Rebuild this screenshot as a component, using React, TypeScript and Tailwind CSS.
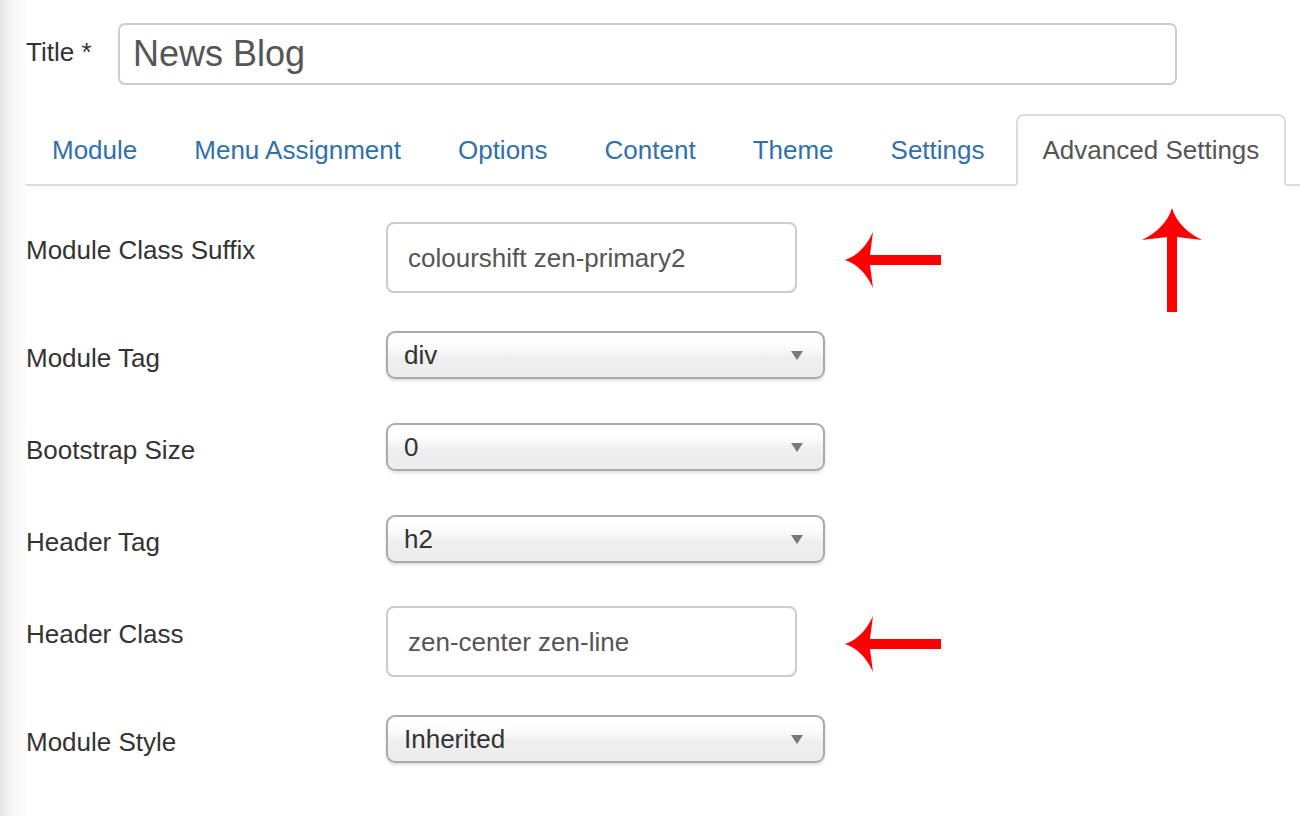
import React from 'react';

const tabs = ['Module', 'Menu Assignment', 'Options', 'Content', 'Theme', 'Settings'];

const LeftArrow = () => (
    <svg width="96" height="56" viewBox="0 0 96 56" className="ml-[48px] mt-[10px] shrink-0">
        <path d="M0 28 Q18 22 28 0 L25 23 H96 V33 H25 L28 56 Q18 34 0 28 Z" fill="#ff0000" />
    </svg>
);

const UpArrow = () => (
    <svg width="60" height="104" viewBox="0 0 60 104" className="absolute left-[1142px] top-[208px]">
        <path d="M30 0 Q36 20 60 32 L35 29 V104 H25 V29 L0 32 Q24 20 30 0 Z" fill="#ff0000" />
    </svg>
);

const TextInput = ({ value }: { value: string }) => (
    <div className="flex h-[71px] w-[411px] shrink-0 items-center rounded-[8px] border-2 border-[#ccc] bg-white pl-[20px] text-[#555]">
        {value}
    </div>
);

const Select = ({ value }: { value: string }) => (
    <div className="flex h-[48px] w-[439px] shrink-0 items-center justify-between rounded-[9px] border-2 border-[#aaa] bg-[linear-gradient(to_bottom,#ffffff_0%,#fdfdfd_30%,#efefef_55%,#ececec_100%)] pl-[16px] pr-[20px] text-[#333] shadow-[0_2px_3px_rgba(0,0,0,0.12)]">
        <span>{value}</span>
        <svg width="12" height="9" viewBox="0 0 12 9">
            <path d="M0 0 H12 L6 9 Z" fill="#7a7a7a" />
        </svg>
    </div>
);

export default function App() {
    return (
        <div className="relative min-h-[816px] w-full bg-[linear-gradient(to_right,#e7e7e7_0px,#f7f7f7_14px,#ffffff_28px)] pl-[26px] pt-[23px] font-['Liberation_Sans',Arial,sans-serif] text-[26px] leading-[36px]">
            {/* Title */}
            <div className="flex items-start">
                <label className="w-[92px] pt-[11px] text-[#333]">Title *</label>
                <div className="flex h-[62px] w-[1059px] items-center rounded-[7px] border-2 border-[#ccc] bg-white pl-[13px] text-[36px] text-[#555]">
                    News Blog
                </div>
            </div>

            {/* Tabs */}
            <ul className="mt-[29px] flex border-b-2 border-[#ddd]">
                {tabs.map((t) => (
                    <li
                        key={t}
                        className="-mb-[2px] mr-[5px] border-2 border-transparent px-[24px] py-[16px] text-[#3071a9]"
                    >
                        {t}
                    </li>
                ))}
                <li className="-mb-[2px] rounded-t-[8px] border-2 border-[#ddd] border-b-white bg-white px-[25px] py-[16px] text-[#555]">
                    Advanced Settings
                </li>
            </ul>

            {/* Form rows */}
            <div className="mt-[36px] flex flex-col">
                <div className="mb-[38px] flex items-start">
                    <label className="w-[360px] pt-[10px] text-[#333]">Module Class Suffix</label>
                    <TextInput value="colourshift zen-primary2" />
                    <LeftArrow />
                </div>
                <div className="mb-[44px] flex items-start">
                    <label className="w-[360px] pt-[9px] text-[#333]">Module Tag</label>
                    <Select value="div" />
                </div>
                <div className="mb-[44px] flex items-start">
                    <label className="w-[360px] pt-[9px] text-[#333]">Bootstrap Size</label>
                    <Select value="0" />
                </div>
                <div className="mb-[43px] flex items-start">
                    <label className="w-[360px] pt-[9px] text-[#333]">Header Tag</label>
                    <Select value="h2" />
                </div>
                <div className="mb-[38px] flex items-start">
                    <label className="w-[360px] pt-[10px] text-[#333]">Header Class</label>
                    <TextInput value="zen-center zen-line" />
                    <LeftArrow />
                </div>
                <div className="flex items-start">
                    <label className="w-[360px] pt-[9px] text-[#333]">Module Style</label>
                    <Select value="Inherited" />
                </div>
            </div>

            <UpArrow />
        </div>
    );
}
